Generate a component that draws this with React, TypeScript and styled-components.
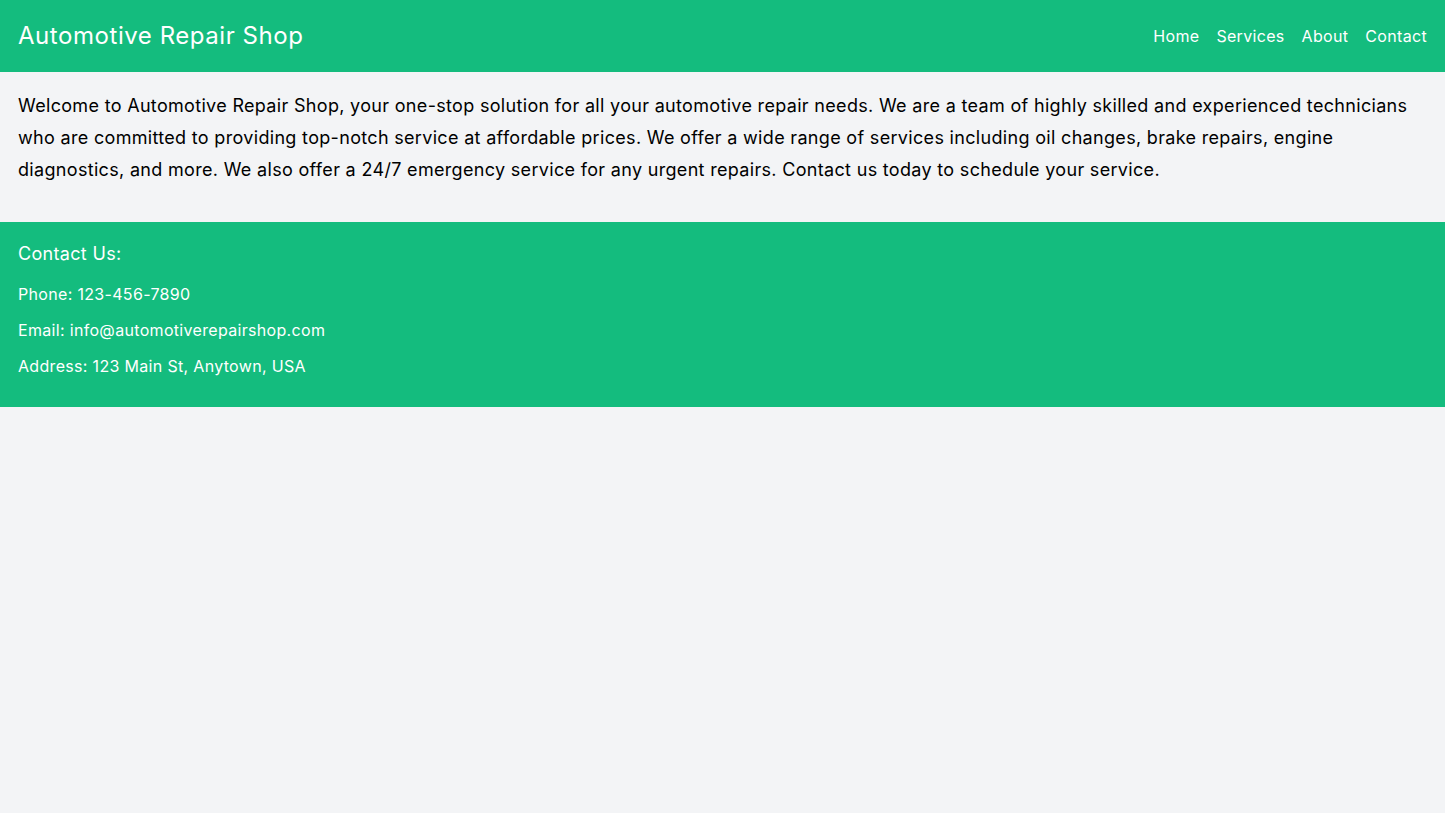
import React from "react";
import styled, { createGlobalStyle } from "styled-components";

const GlobalStyle = createGlobalStyle`
  html, body {
    margin: 0;
    padding: 0;
    background: #f3f4f6;
    font-family: Inter, "Noto Sans", sans-serif;
    letter-spacing: 0.02em;
  }
`;

const Header = styled.header`
  display: flex;
  justify-content: space-between;
  align-items: center;
  height: 72px;
  padding: 0 18px;
  box-sizing: border-box;
  background: #14bc7e;
  color: #fff;
`;

const Title = styled.h1`
  margin: 0;
  font-size: 24px;
  font-weight: 400;
  line-height: 32px;
  letter-spacing: 0.023em;
`;

const NavList = styled.nav`
  display: flex;
  gap: 17px;
  font-size: 16px;
`;

const NavLink = styled.a`
  color: #fff;
  text-decoration: none;
`;

const Main = styled.main`
  padding: 18px 18px 36px;
`;

const Intro = styled.p`
  margin: 0;
  font-size: 18px;
  line-height: 32px;
  color: #000;
`;

const Footer = styled.footer`
  background: #14bc7e;
  color: #fff;
  padding: 18px 18px 19px;
`;

const FooterTitle = styled.h2`
  margin: 0 0 12px;
  font-size: 18px;
  font-weight: 400;
  line-height: 28px;
`;

const FooterLine = styled.p`
  margin: 0 0 8px;
  font-size: 16px;
  line-height: 28px;
`;

const links = ["Home", "Services", "About", "Contact"];

const App = () => {
  return (
    <>
      <GlobalStyle />
      <Header>
        <Title>Automotive Repair Shop</Title>
        <NavList>
          {links.map((l) => (
            <NavLink key={l} href="#">
              {l}
            </NavLink>
          ))}
        </NavList>
      </Header>
      <Main>
        <Intro>
          Welcome to Automotive Repair Shop, your one-stop solution for all your
          automotive repair needs. We are a team of highly skilled and
          experienced technicians who are committed to providing top-notch
          service at affordable prices. We offer a wide range of services
          including oil changes, brake repairs, engine diagnostics, and more. We
          also offer a 24/7 emergency service for any urgent repairs. Contact us
          today to schedule your service.
        </Intro>
      </Main>
      <Footer>
        <FooterTitle>Contact Us:</FooterTitle>
        <FooterLine>Phone: 123-456-7890</FooterLine>
        <FooterLine>Email: info@automotiverepairshop.com</FooterLine>
        <FooterLine>Address: 123 Main St, Anytown, USA</FooterLine>
      </Footer>
    </>
  );
};

export default App;
